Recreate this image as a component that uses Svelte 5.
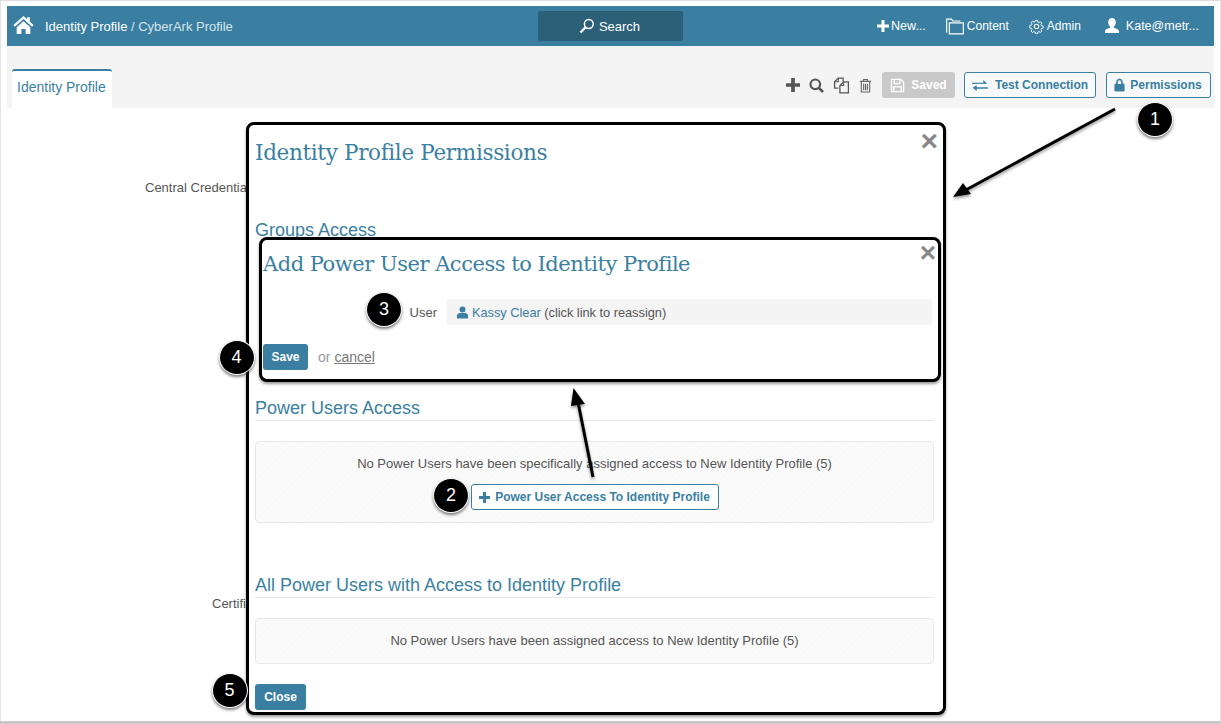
<script>
  const badges = [
    { n: 1, x: 1155, y: 119 },
    { n: 2, x: 451, y: 495 },
    { n: 3, x: 384, y: 309 },
    { n: 4, x: 236.5, y: 357 },
    { n: 5, x: 229.5, y: 690 }
  ];
</script>

<div class="shot">
  <header class="topbar">
    <div class="crumbs">
      <svg class="home" viewBox="0 0 24 22" width="23" height="20"><path fill="#fff" d="M12 1 L1 11 l1.6 1.8L12 4.4l9.4 8.4L23 11l-4-3.6V2.5h-3v2.2zM4.500 13.600V21h5.200v-5.600h4.600V21h5.200v-7.400L12 6.800z"/></svg>
      <span class="c1">Identity Profile</span><span class="c2">&nbsp;/ CyberArk Profile</span>
    </div>
    <div class="search">
      <svg viewBox="0 0 16 16" width="16" height="16"><circle cx="9.800" cy="6" r="4.400" fill="none" stroke="#fff" stroke-width="1.500"/><path d="M6.600 9.200 1.500 14.500" stroke="#fff" stroke-width="2.200" fill="none"/></svg>
      <span>Search</span>
    </div>
    <nav class="menu">
      <span class="item new"><svg viewBox="0 0 12 12" width="12" height="12"><path d="M4.500 0h3v4.500H12v3H7.500V12h-3V7.500H0v-3h4.500z" fill="#fff"/></svg>New...</span>
      <span class="item content"><svg viewBox="0 0 19 18" width="18" height="17"><path d="M.7 15.500V1.200h5l1.500 2h8M3.500 16.800V5.200h14.800v11.600z" fill="none" stroke="#fff" stroke-width="1.200"/></svg>Content</span>
      <span class="item admin"><svg viewBox="0 0 16 16" width="15" height="15"><circle cx="8" cy="8" r="2.400" fill="none" stroke="#fff" stroke-width="1.100"/><path d="M6.800.8h2.400l.4 2 1.400.6 1.700-1.100 1.700 1.700-1.100 1.700.6 1.400 2 .4v2.400l-2 .4-.6 1.400 1.100 1.700-1.700 1.700-1.700-1.100-1.400.6-.4 2H6.800l-.4-2-1.400-.6-1.700 1.100-1.700-1.700 1.100-1.700-.6-1.400-2-.4V6.800l2-.4.6-1.400-1.100-1.700 1.700-1.700 1.700 1.100 1.400-.6z" fill="none" stroke="#fff" stroke-width="1.100" transform="translate(.8 .8) scale(.9)"/></svg>Admin</span>
      <span class="item user"><svg viewBox="0 0 16 16" width="16" height="16"><path d="M8 0c2.400 0 3.800 1.800 3.800 4.200 0 2-1 3.600-2 4.400v1.200c2.200.8 5.200 1.600 5.200 3.400V15H1v-1.800c0-1.800 3-2.600 5.200-3.400V8.600c-1-.8-2-2.400-2-4.400C4.200 1.800 5.600 0 8 0z" fill="#fff"/></svg>Kate@metr...</span>
    </nav>
  </header>

  <div class="toolbar">
    <div class="tab">Identity Profile</div>
    <div class="actions">
      <svg class="i-plus" viewBox="0 0 12 12" width="14" height="14"><path d="M4.400 0h3.200v4.400H12v3.200H7.600V12H4.400V7.600H0V4.400h4.400z" fill="#555"/></svg>
      <svg class="i-find" viewBox="0 0 15 15" width="15" height="15"><circle cx="6.300" cy="6.300" r="4.800" fill="none" stroke="#555" stroke-width="2.200"/><path d="m9.800 9.800 4.200 4.200" stroke="#555" stroke-width="2.600"/></svg>
      <svg class="i-copy" viewBox="0 0 16 16" width="17" height="17"><path d="M5 10.500H1.500V4.500L5 1h4.500v3M6.500 15V8L10 4.500h4.500V15z" fill="none" stroke="#555" stroke-width="1.200"/><path d="M10 4.500V8H6.500M5 1v3.500H1.500" fill="none" stroke="#555" stroke-width="1"/></svg>
      <svg class="i-trash" viewBox="0 0 14 16" width="13" height="15"><path d="M1 3.500h12M5 3.500V1.500h4v2M2.500 3.500V15h9V3.500M5 6v7M7 6v7M9 6v7" fill="none" stroke="#666" stroke-width="1.200"/></svg>
      <span class="btn saved"><svg viewBox="0 0 16 16" width="15" height="15"><path d="M1.500 1.500h10l3 3v10h-13zM4.500 1.500V6h6V1.500M4 14.500V9.500h8v5" fill="none" stroke="#fff" stroke-width="1.400"/></svg>Saved</span>
      <span class="btn outline test"><svg viewBox="0 0 17 14" width="16" height="13"><path d="M0 4h12V1.200L16.500 5 0 5.500zM17 9H5V6.800L.5 9.500 5 13v-2.500h12z" fill="#3a7fa1"/></svg>Test Connection</span>
      <span class="btn outline perm"><svg viewBox="0 0 12 15" width="11" height="14"><path d="M1 6.500h10V14H1zM3 6.500V4a3 3 0 0 1 6 0v2.500" fill="#3a7fa1" stroke="#3a7fa1" stroke-width="1"/><path d="M4.200 6.500V4a1.800 1.800 0 0 1 3.600 0v2.500" fill="#f4f4f4"/></svg>Permissions</span>
    </div>
  </div>

  <main class="form">
    <div class="lbl first">Central Credentials</div>
    <div class="lbl second">Certificate</div>
  </main>
</div>

<section class="modal">
  <button class="x big" aria-label="Close">×</button>
  <h2>Identity Profile Permissions</h2>
  <h3 class="groups">Groups Access</h3>
  <h3 class="power">Power Users Access</h3>
  <div class="well one">
    <p>No Power Users have been specifically assigned access to New Identity Profile (5)</p>
    <span class="btn outline add"><svg viewBox="0 0 12 12" width="11" height="11"><path d="M4.400 0h3.200v4.400H12v3.200H7.600V12H4.400V7.600H0V4.400h4.400z" fill="#3a7fa1"/></svg>Power User Access To Identity Profile</span>
  </div>
  <h3 class="all">All Power Users with Access to Identity Profile</h3>
  <div class="well two"><p>No Power Users have been assigned access to New Identity Profile (5)</p></div>
  <span class="btn solid close">Close</span>
</section>

<section class="inner">
  <button class="x small" aria-label="Close">×</button>
  <h2>Add Power User Access to Identity Profile</h2>
  <div class="row">
    <span class="ulabel">User</span>
    <div class="uval">
      <svg viewBox="0 0 14 14" width="13" height="13"><circle cx="7" cy="3.700" r="3.200" fill="#3a7fa1"/><path d="M1 13.500V10.500c0-2 2-3 3-3h6c1 0 3 1 3 3v3z" fill="#3a7fa1"/></svg>
      <a href="#top">Kassy Clear</a> (click link to reassign)
    </div>
  </div>
  <div class="foot">
    <span class="btn solid save">Save</span>
    <span class="or">or</span>
    <span class="cancel">cancel</span>
  </div>
</section>

<svg class="arrows" viewBox="0 0 1221 724" width="1221" height="724" aria-hidden="true">
  <defs>
    <filter id="sh" x="-30%" y="-30%" width="160%" height="160%"><feDropShadow dx="0" dy="2" stdDeviation="1.500" flood-color="#000" flood-opacity=".4"/></filter>
  </defs>
  <g filter="url(#sh)">
    <path d="M1115 109 964 191" stroke="#000" stroke-width="3" fill="none"/>
    <path d="M953 197 963 183 971 194z" fill="#000"/>
    <path d="M593 477 578 402" stroke="#000" stroke-width="3" fill="none"/>
    <path d="M573.500 388 585 404 571 406z" fill="#000"/>
  </g>
</svg>

{#each badges as b}
  <div class="badge" style="left:{b.x - 18}px;top:{b.y - 17.5}px">{b.n}</div>
{/each}

<style>
  :global(body) { margin: 0; background: #fff; }
  :global(#app) { width: 1221px; height: 724px; position: relative; overflow: hidden; font-family: "Liberation Sans", Arial, sans-serif; color: #555; }
  svg { display: block; flex: none; }

  .shot {
    box-sizing: border-box; width: 1221px; height: 724px; padding: 5px 7px 0;
    border-top: 1px solid #ddd; border-bottom: 3px solid #c8c8c8; display: flex; flex-direction: column;
    box-shadow: inset 1px 0 0 #e4e4e4, inset -1px 0 0 #e4e4e4;
  }
  .topbar {
    height: 40px; background: #3a7fa1; display: grid; grid-template-columns: 1fr 145px 1fr; align-items: center; flex: none; color: #fff; font-size: 13px;
  }
  .crumbs { display: flex; align-items: center; padding-left: 5px; }
  .home { margin-right: 10px; margin-top: -2px; }
  .c1 { color: #fff; }
  .c2 { color: #d5e4ec; }
  .search {
    height: 30px; background: #2c6079; border-radius: 2px; display: flex; align-items: center; justify-content: center; gap: 4px; font-size: 13px; color: #fff; padding-right: 2px; box-sizing: border-box;
  }
  .menu { display: flex; justify-content: flex-end; align-items: center; padding-right: 15px; font-size: 12.500px; }
  .item { display: flex; align-items: center; gap: 3px; }
  .new { margin-right: 20px; gap: 2px; }
  .content { margin-right: 20px; font-size: 12px; }
  .admin { margin-right: 23px; font-size: 12px; }
  .user { gap: 6px; }

  .toolbar { height: 62px; background: #f4f4f4; flex: none; display: flex; justify-content: space-between; align-items: flex-end; padding: 0 3px 0 5px; }
  .tab {
    box-sizing: border-box; width: 100px; height: 39px; background: #fff; border-top: 2px solid #3a7fa1; border-radius: 3px 3px 0 0;
    color: #3a7fa1; font-size: 14px; padding: 8px 0 0 5px; white-space: nowrap;
  }
  .actions { display: flex; align-items: center; height: 26px; padding-bottom: 10px; }
  .i-find { margin-left: 9px; }
  .i-copy { margin-left: 9px; }
  .i-trash { margin-left: 9px; }
  .btn { box-sizing: border-box; display: inline-flex; align-items: center; border-radius: 3px; font-size: 12px; font-weight: 700; white-space: nowrap; }
  .saved { width: 73px; height: 26px; background: #c9c9c9; color: #fff; gap: 6px; justify-content: center; margin-left: 10px; }
  .outline { border: 1px solid #3a7fa1; color: #3a7fa1; background: #fff; }
  .toolbar .outline { background: #f7f9fa; }
  .test { width: 132px; height: 26px; gap: 7px; justify-content: center; margin-left: 9px; }
  .perm { width: 105px; height: 26px; gap: 5px; justify-content: center; margin-left: 10px; padding-right: 1px; }

  .form { position: relative; flex: 1; font-size: 13px; }
  .lbl { position: absolute; white-space: nowrap; color: #555; }
  .first { left: 138px; top: 72px; }
  .second { left: 205px; top: 488px; }

  .modal, .inner {
    position: absolute; box-sizing: border-box; background: #fff; border: 3px solid #000; border-radius: 8px;
    box-shadow: 0 2px 3px rgba(0,0,0,.4);
  }
  .modal { left: 246px; top: 122px; width: 700px; height: 593px; padding: 13px 9px 0 6px; }
  h2 { margin: 0; font-family: "DejaVu Serif", serif; font-weight: 400; color: #3a7fa1; font-size: 21.500px; letter-spacing: -.33px; line-height: 30px; white-space: nowrap; }
  h3 { margin: 0; font-weight: 400; color: #3a7fa1; font-size: 18px; line-height: 22px; border-bottom: 1px solid #e6e6e6; padding-bottom: 1px; }
  .groups { margin-top: 51px; border: none; }
  .power { margin-top: 155px; }
  .well {
    box-sizing: border-box; border: 1px solid #e8e8e8; border-radius: 4px; text-align: center; font-size: 13px; color: #555;
    background: repeating-linear-gradient(135deg, #fbfbfb 0 2px, #f9f9f9 2px 4px);
  }
  .well p { margin: 0; }
  .one { height: 82px; margin-top: 20px; padding-top: 14px; }
  .add { height: 26px; width: 248px; margin-top: 13px; gap: 5px; justify-content: center; }
  .all { margin-top: 51px; }
  .two { height: 46px; margin-top: 20px; padding-top: 14px; }
  .solid { background: #3a7fa1; color: #fff; justify-content: center; }
  .close { display: flex; width: 51px; height: 26px; margin-top: 20px; }

  .x { position: absolute; padding: 0; border: none; background: none; color: #888; font-family: "Liberation Sans", sans-serif; font-weight: 700; line-height: 1; }
  .big { right: 5px; top: 1px; font-size: 30px; }
  .small { right: 2px; top: -1px; font-size: 28px; }

  .inner { left: 259px; top: 237px; width: 682px; height: 145px; padding: 9px 6px 0 1px; }
  .inner h2 { font-size: 21px; letter-spacing: -.48px; }
  .row { display: flex; align-items: center; margin-top: 20px; font-size: 13px; }
  .ulabel { width: 174px; text-align: right; padding-right: 10px; }
  .uval { flex: 1; height: 26px; background: #f4f4f4; display: flex; align-items: center; padding-left: 9px; white-space: pre; letter-spacing: -.02px; font-size: 12.800px; }
  .uval svg { margin-right: 3px; }
  .uval a { color: #3a7fa1; text-decoration: none; }
  .foot { display: flex; align-items: center; margin-top: 19px; font-size: 14px; }
  .save { width: 45px; height: 26px; }
  .or { margin-left: 10px; color: #999; }
  .cancel { margin-left: 4px; color: #777; text-decoration: underline; }

  .arrows { position: absolute; left: 0; top: 0; pointer-events: none; }
  .badge {
    position: absolute; width: 36px; height: 35px; border-radius: 50%; background: #000; color: #fff; box-sizing: border-box;
    border: 1px solid #fff; display: flex; align-items: center; justify-content: center; font-size: 18px; box-shadow: 0 2px 3px rgba(0,0,0,.5);
  }
</style>
